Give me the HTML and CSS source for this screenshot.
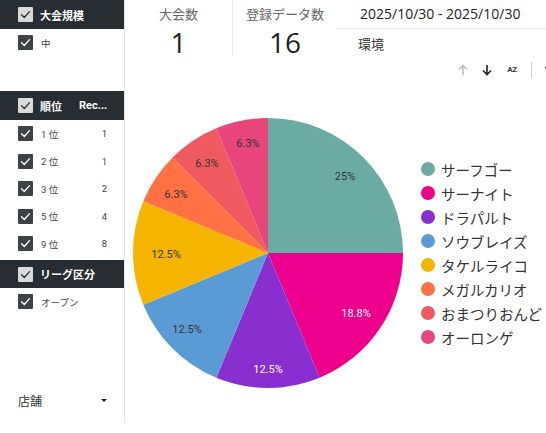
FILE: index.html
```html
<!DOCTYPE html>
<html lang="ja">
<head>
<meta charset="utf-8">
<title>大会ダッシュボード</title>
<link rel="stylesheet" href="styles.css">
</head>
<body>
<div class="page">
  <aside class="sidebar">
    <section class="filter filter-a">
      <div class="fhead">
        <span class="cb cb-light"><svg viewBox="0 0 15 15"><polyline points="3.5,7.8 6.3,10.5 11.5,4.6"/></svg></span>
        <span class="ftitle">大会規模</span>
      </div>
      <div class="frow">
        <span class="cb cb-dark"><svg viewBox="0 0 15 15"><polyline points="3.5,7.8 6.3,10.5 11.5,4.6"/></svg></span>
        <span class="flabel">中</span>
      </div>
    </section>
    <section class="filter filter-b">
      <div class="fhead">
        <span class="cb cb-light"><svg viewBox="0 0 15 15"><polyline points="3.5,7.8 6.3,10.5 11.5,4.6"/></svg></span>
        <span class="ftitle ftitle-fixed">順位</span>
        <span class="fcol">Rec...</span>
      </div>
      <div class="frow">
        <span class="cb cb-dark"><svg viewBox="0 0 15 15"><polyline points="3.5,7.8 6.3,10.5 11.5,4.6"/></svg></span>
        <span class="flabel">1 位</span><span class="fval">1</span>
      </div>
      <div class="frow">
        <span class="cb cb-dark"><svg viewBox="0 0 15 15"><polyline points="3.5,7.8 6.3,10.5 11.5,4.6"/></svg></span>
        <span class="flabel">2 位</span><span class="fval">1</span>
      </div>
      <div class="frow">
        <span class="cb cb-dark"><svg viewBox="0 0 15 15"><polyline points="3.5,7.8 6.3,10.5 11.5,4.6"/></svg></span>
        <span class="flabel">3 位</span><span class="fval">2</span>
      </div>
      <div class="frow">
        <span class="cb cb-dark"><svg viewBox="0 0 15 15"><polyline points="3.5,7.8 6.3,10.5 11.5,4.6"/></svg></span>
        <span class="flabel">5 位</span><span class="fval">4</span>
      </div>
      <div class="frow">
        <span class="cb cb-dark"><svg viewBox="0 0 15 15"><polyline points="3.5,7.8 6.3,10.5 11.5,4.6"/></svg></span>
        <span class="flabel">9 位</span><span class="fval">8</span>
      </div>
    </section>
    <section class="filter filter-c">
      <div class="fhead fhead-short">
        <span class="cb cb-light"><svg viewBox="0 0 15 15"><polyline points="3.5,7.8 6.3,10.5 11.5,4.6"/></svg></span>
        <span class="ftitle">リーグ区分</span>
      </div>
      <div class="frow">
        <span class="cb cb-dark"><svg viewBox="0 0 15 15"><polyline points="3.5,7.8 6.3,10.5 11.5,4.6"/></svg></span>
        <span class="flabel">オープン</span>
      </div>
    </section>
    <div class="dropdown">
      <span class="dlabel">店舗</span>
      <span class="caret"></span>
    </div>
  </aside>

  <main class="main">
    <div class="topbar">
      <div class="score score-a">
        <div class="slabel">大会数</div>
        <div class="svalue">1</div>
      </div>
      <div class="score score-b">
        <div class="slabel">登録データ数</div>
        <div class="svalue">16</div>
      </div>
      <div class="controls">
        <div class="daterange">2025/10/30 - 2025/10/30</div>
        <div class="env">環境</div>
      </div>
    </div>

    <div class="toolbar">
      <span class="tool tool-up"><svg viewBox="0 0 12 12"><path d="M6 11V1.5M2 5.5L6 1.5L10 5.5"/></svg></span>
      <span class="tool tool-down"><svg viewBox="0 0 12 12"><path d="M6 1V10.5M2 6.5L6 10.5L10 6.5"/></svg></span>
      <span class="tool tool-az">AZ</span>
      <span class="tool-sep"></span>
      <span class="tool tool-more"><svg viewBox="0 0 8 12"><path d="M1 3.5H7M5.5 3.5V8"/></svg></span>
    </div>

    <div class="chart">
      <svg class="pie" viewBox="0 0 270 270" width="270" height="270">
        <path fill="#6aaca4" d="M135,135 L135,0 A135,135 0 0 1 270,135 Z"/>
        <path fill="#ec008c" d="M135,135 L270,135 A135,135 0 0 1 186.66,259.72 Z"/>
        <path fill="#8a2fcf" d="M135,135 L186.66,259.72 A135,135 0 0 1 83.34,259.72 Z"/>
        <path fill="#5b9bd5" d="M135,135 L83.34,259.72 A135,135 0 0 1 10.28,186.66 Z"/>
        <path fill="#f5b400" d="M135,135 L10.28,186.66 A135,135 0 0 1 10.28,83.34 Z"/>
        <path fill="#ff7043" d="M135,135 L10.28,83.34 A135,135 0 0 1 39.54,39.54 Z"/>
        <path fill="#ef5a60" d="M135,135 L39.54,39.54 A135,135 0 0 1 83.34,10.28 Z"/>
        <path fill="#e8457a" d="M135,135 L83.34,10.28 A135,135 0 0 1 135,0 Z"/>
        <g class="plabels">
          <text x="212" y="62">25%</text>
          <text class="light" x="223" y="199">18.8%</text>
          <text class="light" x="135" y="255">12.5%</text>
          <text x="54" y="215">12.5%</text>
          <text x="33" y="140">12.5%</text>
          <text x="43" y="80">6.3%</text>
          <text x="74" y="49">6.3%</text>
          <text x="115" y="29">6.3%</text>
        </g>
      </svg>
      <ul class="legend">
        <li><span class="dot c1"></span>サーフゴー</li>
        <li><span class="dot c2"></span>サーナイト</li>
        <li><span class="dot c3"></span>ドラパルト</li>
        <li><span class="dot c4"></span>ソウブレイズ</li>
        <li><span class="dot c5"></span>タケルライコ</li>
        <li><span class="dot c6"></span>メガルカリオ</li>
        <li><span class="dot c7"></span>おまつりおんど</li>
        <li><span class="dot c8"></span>オーロンゲ</li>
      </ul>
    </div>
  </main>
</div>
</body>
</html>
```

FILE: styles.css
```css
* { box-sizing: border-box; }

html, body {
  margin: 0;
  padding: 0;
}

body {
  width: 546px;
  height: 433px;
  overflow: hidden;
  background: #fff;
  font-family: "Roboto", "Noto Sans CJK JP", sans-serif;
  color: #333;
}

.page {
  display: grid;
  grid-template-columns: 125px 421px;
  height: 433px;
}

/* ---------- sidebar ---------- */
.sidebar {
  display: flex;
  flex-direction: column;
  height: 423px;
  border-right: 1px solid #e4e4e4;
}

.filter-a { height: 91px; }
.filter-b { height: 169px; }
.filter-c { height: 55px; }

.fhead {
  height: 29px;
  background: #262d33;
  display: flex;
  align-items: center;
  padding-left: 18px;
  color: #fff;
  font-weight: 700;
  font-size: 11px;
  font-family: "Noto Sans CJK JP", sans-serif;
}

.fhead-short { height: 28px; }

.ftitle { margin-left: 7px; }
.ftitle-fixed { width: 39px; flex: none; }

.fcol {
  font-family: "Roboto", sans-serif;
  font-weight: 700;
  font-size: 11px;
}

.cb {
  width: 15px;
  height: 15px;
  flex: none;
  border-radius: 1px;
  display: block;
}

.cb svg {
  display: block;
  width: 15px;
  height: 15px;
  fill: none;
  stroke-width: 1.3;
  stroke-linecap: round;
  stroke-linejoin: round;
}

.cb-light { background: #dadada; }
.cb-light svg { stroke: #2b3136; }

.cb-dark { background: #3c4348; }
.cb-dark svg { stroke: #fff; }

.frow {
  height: 27.5px;
  display: flex;
  align-items: center;
  padding-left: 18px;
  padding-right: 17px;
  font-size: 9.5px;
  color: #444;
}

.flabel { margin-left: 8px; }
.fval { margin-left: auto; }

.dropdown {
  margin-top: auto;
  height: 46px;
  display: flex;
  align-items: center;
  justify-content: space-between;
  padding: 0 17px 0 18px;
  font-size: 12px;
  color: #333;
  font-family: "Noto Sans CJK JP", sans-serif;
}

.caret {
  width: 0;
  height: 0;
  margin-top: 1px;
  border-left: 3px solid transparent;
  border-right: 3px solid transparent;
  border-top: 3px solid #222;
}

/* ---------- main ---------- */
.main {
  display: flex;
  flex-direction: column;
  min-width: 0;
}

.topbar {
  display: flex;
  height: 56px;
}

.score {
  text-align: center;
  padding-top: 4px;
  flex: none;
}

.score-a {
  width: 108px;
  border-right: 1px solid #ececec;
}

.score-b { width: 104px; }

.slabel {
  font-size: 13px;
  line-height: 20px;
  color: #666;
  font-family: "Noto Sans CJK JP", sans-serif;
}

.svalue {
  margin-top: 2px;
  font-family: "Open Sans", sans-serif;
  font-size: 28px;
  line-height: 32px;
  color: #222;
}

.controls {
  flex: 1;
  min-width: 0;
}

.daterange {
  height: 29px;
  border-bottom: 1px solid #e6e6e6;
  padding-left: 23px;
  font-family: "Open Sans", sans-serif;
  font-size: 14px;
  line-height: 28px;
  color: #222;
  white-space: nowrap;
}

.env {
  margin-top: 5px;
  padding-left: 21px;
  font-size: 13px;
  line-height: 20px;
  color: #333;
  font-family: "Noto Sans CJK JP", sans-serif;
}

.toolbar {
  margin-top: 4px;
  height: 20px;
  display: flex;
  align-items: center;
  padding-left: 332px;
  gap: 12px;
  white-space: nowrap;
}

.tool {
  display: block;
  flex: none;
}

.tool svg {
  display: block;
  width: 12px;
  height: 12px;
  fill: none;
  stroke-width: 1.6;
}

.tool-up svg { stroke: #bdbdbd; }
.tool-down svg { stroke: #222; }

.tool-az {
  width: 14px;
  text-align: center;
  font-family: "Roboto", sans-serif;
  font-weight: 700;
  font-size: 8px;
  line-height: 12px;
  letter-spacing: -0.3px;
  color: #333;
}

.tool-sep {
  width: 1px;
  height: 16px;
  background: #cfcfcf;
  flex: none;
}

.tool-more svg {
  width: 8px;
  stroke: #333;
  stroke-width: 1.3;
}

.chart {
  margin-top: 38px;
  display: flex;
  align-items: center;
}

.pie {
  display: block;
  flex: none;
  margin-left: 8px;
}

.plabels text {
  font-family: "Roboto", sans-serif;
  font-size: 11px;
  fill: #333;
  text-anchor: middle;
}

.plabels text.light { fill: #fff; }

.legend {
  list-style: none;
  margin: 0 0 0 18px;
  padding: 0;
  flex: none;
}

.legend li {
  height: 24px;
  display: flex;
  align-items: center;
  gap: 6px;
  font-size: 14.5px;
  color: #333;
  white-space: nowrap;
}

.dot {
  width: 14px;
  height: 14px;
  border-radius: 50%;
  flex: none;
}

.c1 { background: #6aaca4; }
.c2 { background: #ec008c; }
.c3 { background: #8a2fcf; }
.c4 { background: #5b9bd5; }
.c5 { background: #f5b400; }
.c6 { background: #ff7043; }
.c7 { background: #ef5a60; }
.c8 { background: #e8457a; }
```
